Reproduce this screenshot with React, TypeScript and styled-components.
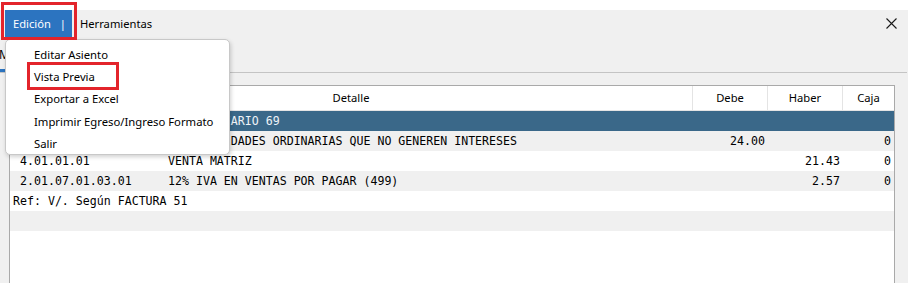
import styled, { createGlobalStyle } from 'styled-components';

const GlobalStyle = createGlobalStyle`
  html, body {
    margin: 0;
    padding: 0;
    background: #ffffff;
  }
  body {
    font-family: 'Noto Sans', 'Open Sans', sans-serif;
    font-size: 11.2px;
    color: #000;
  }
`;

const Page = styled.div`
  position: relative;
  width: 908px;
  height: 283px;
  overflow: hidden;
  padding-top: 10px;
  box-sizing: border-box;
`;

const Window = styled.div`
  height: 273px;
  background: #f0f0f0;
  display: flex;
  flex-direction: column;
`;

const MenuBar = styled.div`
  height: 28px;
  display: flex;
  align-items: stretch;
  padding-left: 5px;
  padding-right: 11px;
`;

const MenuButton = styled.div<{ active?: boolean }>`
  display: flex;
  align-items: center;
  padding: 0 8px;
  height: 27px;
  box-sizing: border-box;
  width: ${({ active }) => (active ? '67px' : 'auto')};
  background: ${({ active }) => (active ? '#2c74c0' : 'transparent')};
  color: ${({ active }) => (active ? '#ffffff' : '#000000')};
  white-space: pre;
`;

const Spacer = styled.div`
  flex: 1;
`;

const CloseButton = styled.div`
  display: flex;
  align-items: center;
  padding-bottom: 2px;
`;

const TabRow = styled.div`
  height: 34px;
  display: flex;
  align-items: flex-end;
  border-bottom: 1px solid #c4c4c4;
  margin-right: 1px;
`;

const Tab = styled.div`
  padding: 0 6px 0 0;
  margin-left: -1px;
  height: 26px;
  display: flex;
  align-items: flex-start;
  border-bottom: 3px solid #2c74c0;
  box-sizing: border-box;
  font-size: 12px;
`;

const Content = styled.div`
  flex: 1;
  padding: 12px 13px 0 9px;
  display: flex;
`;

const Table = styled.div`
  flex: 1;
  background: #ffffff;
  border: 1px solid #a9a9a9;
  border-bottom: none;
  display: flex;
  flex-direction: column;
`;

const COLS = '158px 525px 75px 75px 51px';

const HeaderRow = styled.div`
  display: grid;
  grid-template-columns: ${COLS};
  height: 25px;
  border-bottom: 1px solid #e4e4e4;
  box-sizing: border-box;
`;

const HeaderCell = styled.div<{ span?: number; last?: boolean }>`
  grid-column: span ${({ span }) => span ?? 1};
  display: flex;
  align-items: center;
  justify-content: center;
  border-right: ${({ last }) => (last ? 'none' : '1px solid #e4e4e4')};
  padding-bottom: 1px;
`;

const Row = styled.div<{ tone: 'white' | 'gray' | 'selected' }>`
  display: grid;
  grid-template-columns: ${COLS};
  height: 20px;
  align-items: center;
  font-family: 'DejaVu Sans Mono', 'Liberation Mono', monospace;
  font-size: 11.6px;
  white-space: pre;
  background: ${({ tone }) =>
    tone === 'selected' ? '#3a6889' : tone === 'gray' ? '#f0f0f0' : '#ffffff'};
  color: ${({ tone }) => (tone === 'selected' ? '#eef3f7' : '#000000')};
`;

const Cell = styled.div<{ align?: 'right'; pad?: number; span?: number }>`
  grid-column: span ${({ span }) => span ?? 1};
  text-align: ${({ align }) => align ?? 'left'};
  padding-left: ${({ pad }) => pad ?? 0}px;
  padding-right: ${({ align }) => (align === 'right' ? 3 : 0)}px;
  overflow: hidden;
`;

const Dropdown = styled.div`
  position: absolute;
  left: 5px;
  top: 39px;
  width: 225px;
  height: 116px;
  box-sizing: border-box;
  background: #ffffff;
  border: 1px solid #c8c8c8;
  border-radius: 5px;
  box-shadow: 1px 2px 4px rgba(0, 0, 0, 0.18);
  padding-top: 3px;
  font-size: 11.3px;
`;

const DropItem = styled.div`
  height: 22.4px;
  display: flex;
  align-items: center;
  padding-left: 28px;
`;

const Highlight = styled.div<{ x: number; y: number; w: number; h: number }>`
  position: absolute;
  left: ${({ x }) => x}px;
  top: ${({ y }) => y}px;
  width: ${({ w }) => w}px;
  height: ${({ h }) => h}px;
  border: 3px solid #e3242b;
  box-sizing: border-box;
  pointer-events: none;
`;

const rows = [
  { tone: 'selected' as const, code: '', detail: 'COMPR. DIARIO 69', debe: '', haber: '', caja: '' },
  { tone: 'gray' as const, code: '5.01.01.01', detail: 'DE ACTIVIDADES ORDINARIAS QUE NO GENEREN INTERESES', debe: '24.00', haber: '', caja: '0' },
  { tone: 'white' as const, code: '4.01.01.01', detail: 'VENTA MATRIZ', debe: '', haber: '21.43', caja: '0' },
  { tone: 'gray' as const, code: '2.01.07.01.03.01', detail: '12% IVA EN VENTAS POR PAGAR (499)', debe: '', haber: '2.57', caja: '0' },
];

const menuItems = [
  'Editar Asiento',
  'Vista Previa',
  'Exportar a Excel',
  'Imprimir Egreso/Ingreso Formato',
  'Salir',
];

export default function App() {
  return (
    <Page>
      <GlobalStyle />
      <Window>
        <MenuBar>
          <MenuButton active>{'Edición   |'}</MenuButton>
          <MenuButton>Herramientas</MenuButton>
          <Spacer />
          <CloseButton>
            <svg width="11" height="11" viewBox="0 0 11 11">
              <path d="M0.5 0.5 L10.5 10.5 M10.5 0.5 L0.5 10.5" stroke="#1a1a1a" strokeWidth="1.1" />
            </svg>
          </CloseButton>
        </MenuBar>
        <TabRow>
          <Tab>Movimientos</Tab>
        </TabRow>
        <Content>
          <Table>
            <HeaderRow>
              <HeaderCell span={2}>Detalle</HeaderCell>
              <HeaderCell>Debe</HeaderCell>
              <HeaderCell>Haber</HeaderCell>
              <HeaderCell last>Caja</HeaderCell>
            </HeaderRow>
            {rows.map((r, i) => (
              <Row key={i} tone={r.tone}>
                <Cell pad={10}>{r.code}</Cell>
                <Cell>{r.detail}</Cell>
                <Cell align="right">{r.debe}</Cell>
                <Cell align="right">{r.haber}</Cell>
                <Cell align="right">{r.caja}</Cell>
              </Row>
            ))}
            <Row tone="white">
              <Cell pad={3} span={5}>Ref: V/. Según FACTURA 51</Cell>
            </Row>
            <Row tone="gray" />
          </Table>
        </Content>
      </Window>
      <Dropdown>
        {menuItems.map((m) => (
          <DropItem key={m}>{m}</DropItem>
        ))}
      </Dropdown>
      <Highlight x={1} y={2} w={76} h={38} />
      <Highlight x={27} y={62} w={92} h={28} />
    </Page>
  );
}
